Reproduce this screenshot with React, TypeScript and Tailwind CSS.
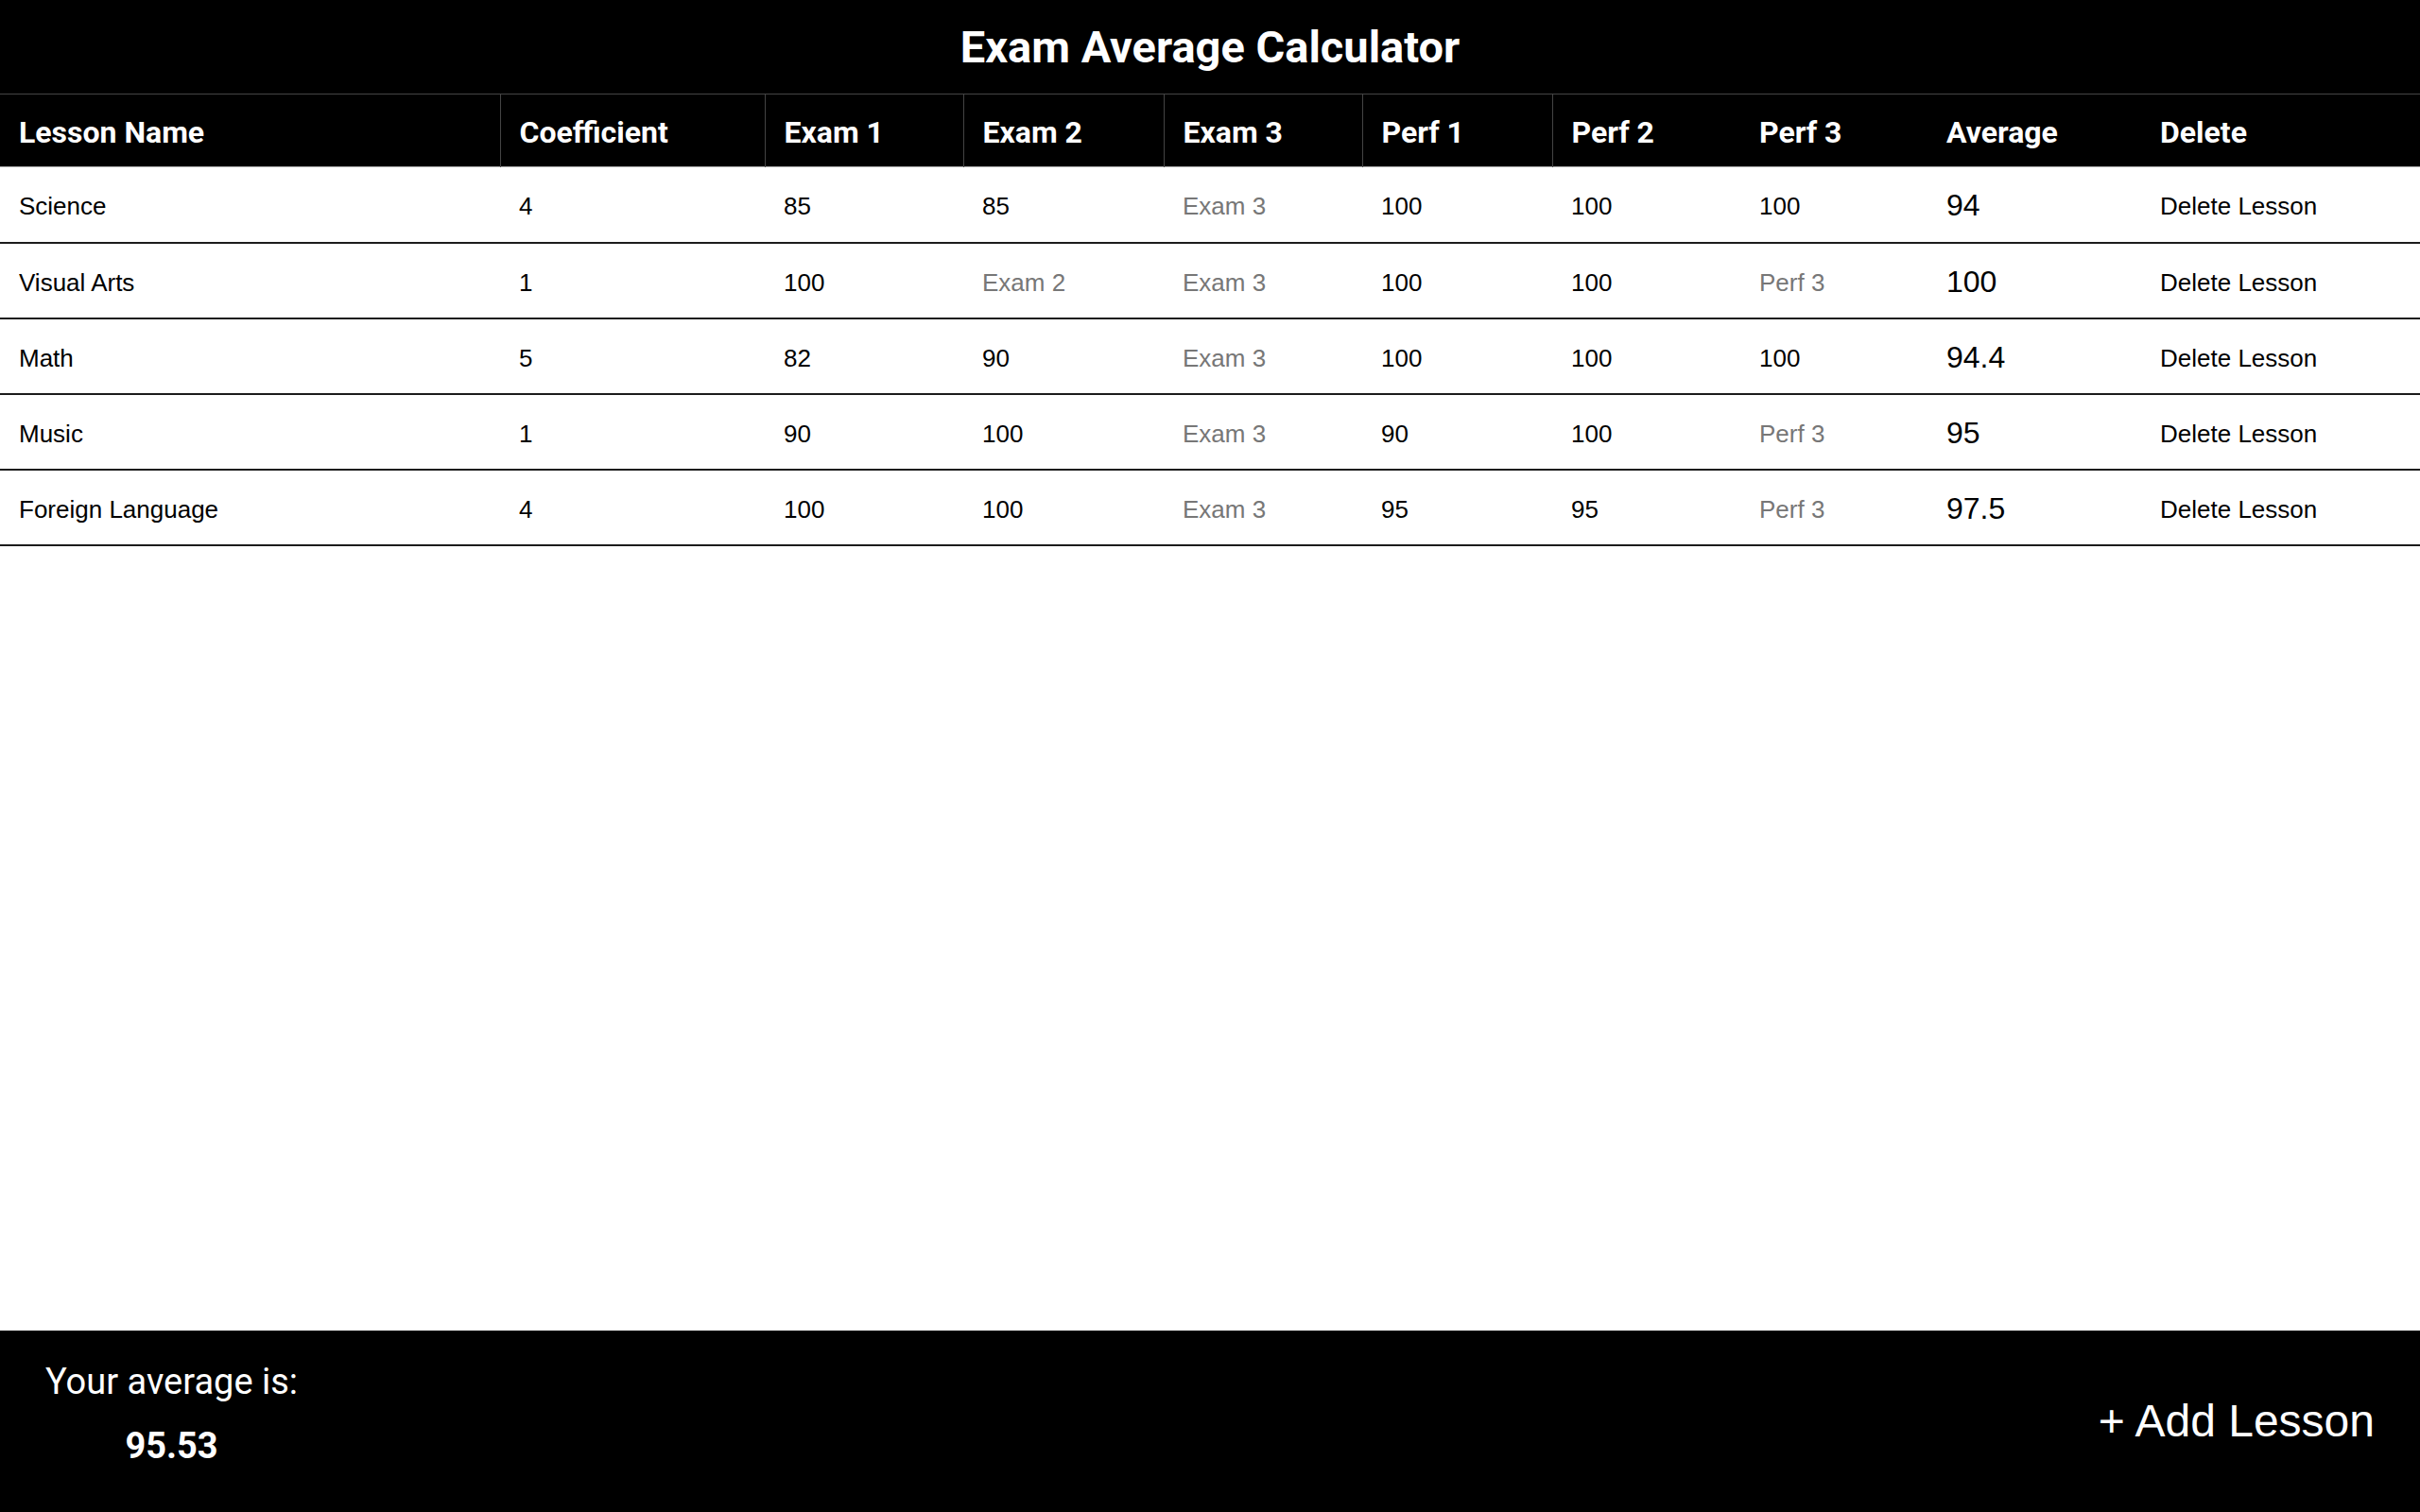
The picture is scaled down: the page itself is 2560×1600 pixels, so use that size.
import React from 'react';

type Lesson = {
  name: string;
  coef: string;
  exams: string[];
  perfs: string[];
  average: string;
};

const lessons: Lesson[] = [
  { name: 'Science', coef: '4', exams: ['85', '85', ''], perfs: ['100', '100', '100'], average: '94' },
  { name: 'Visual Arts', coef: '1', exams: ['100', '', ''], perfs: ['100', '100', ''], average: '100' },
  { name: 'Math', coef: '5', exams: ['82', '90', ''], perfs: ['100', '100', '100'], average: '94.4' },
  { name: 'Music', coef: '1', exams: ['90', '100', ''], perfs: ['90', '100', ''], average: '95' },
  { name: 'Foreign Language', coef: '4', exams: ['100', '100', ''], perfs: ['95', '95', ''], average: '97.5' },
];

const cellInput =
  "w-full bg-transparent outline-none text-[26px] text-black placeholder:text-[#777] font-['Liberation_Sans',Arial,sans-serif]";

function Cell({ value, placeholder }: { value: string; placeholder: string }) {
  return (
    <td className="px-5 pt-[5px] border-b-2 border-[#1c1c1c]">
      <input className={cellInput} defaultValue={value} placeholder={placeholder} />
    </td>
  );
}

export default function App() {
  return (
    <div className="min-h-screen flex flex-col bg-white font-['Roboto',sans-serif]">
      {/* Title */}
      <header className="h-[99px] bg-black flex items-center justify-center">
        <h1 className="text-[47px] font-bold text-white leading-none">Exam Average Calculator</h1>
      </header>

      {/* Lessons table */}
      <table className="w-full table-fixed border-collapse">
        <colgroup>
          <col className="w-[529px]" />
          <col className="w-[280px]" />
          <col className="w-[210px]" />
          <col className="w-[212px]" />
          <col className="w-[210px]" />
          <col className="w-[201px]" />
          <col className="w-[199px]" />
          <col className="w-[198px]" />
          <col className="w-[226px]" />
          <col className="w-[295px]" />
        </colgroup>
        <thead>
          <tr className="h-[77px] bg-black text-white text-left text-[32px] font-bold border-t border-[#444] border-b border-b-[#aaa]">
            <th className="px-5 pt-[3px] border-r border-[#444]">Lesson Name</th>
            <th className="px-5 pt-[3px] border-r border-[#444]">Coefficient</th>
            <th className="px-5 pt-[3px] border-r border-[#444]">Exam 1</th>
            <th className="px-5 pt-[3px] border-r border-[#444]">Exam 2</th>
            <th className="px-5 pt-[3px] border-r border-[#444]">Exam 3</th>
            <th className="px-5 pt-[3px] border-r border-[#444]">Perf 1</th>
            <th className="px-5 pt-[3px]">Perf 2</th>
            <th className="px-5 pt-[3px]">Perf 3</th>
            <th className="px-5 pt-[3px]">Average</th>
            <th className="px-5 pt-[3px]">Delete</th>
          </tr>
        </thead>
        <tbody>
          {lessons.map((l) => (
            <tr key={l.name} className="h-[80px]">
              <Cell value={l.name} placeholder="Lesson Name" />
              <Cell value={l.coef} placeholder="Coefficient" />
              {l.exams.map((v, i) => (
                <Cell key={'e' + i} value={v} placeholder={'Exam ' + (i + 1)} />
              ))}
              {l.perfs.map((v, i) => (
                <Cell key={'p' + i} value={v} placeholder={'Perf ' + (i + 1)} />
              ))}
              <td className="px-5 pt-[2px] border-b-2 border-[#1c1c1c] text-[32px] text-black font-['Liberation_Sans',Arial,sans-serif]">
                {l.average}
              </td>
              <td className="px-5 pt-[5px] border-b-2 border-[#1c1c1c]">
                <button className="text-[26px] text-black font-['Liberation_Sans',Arial,sans-serif]">Delete Lesson</button>
              </td>
            </tr>
          ))}
        </tbody>
      </table>

      {/* Footer */}
      <footer className="mt-auto h-[192px] bg-black text-white flex items-center justify-between pl-12 pr-[48px]">
        <div className="self-start pt-8 inline-flex flex-col items-center gap-6">
          <p className="text-[38px] leading-[1.17]">Your average is:</p>
          <p className="text-[38px] font-bold leading-[1.17]">95.53</p>
        </div>
        <button className="text-[48px] font-['Liberation_Sans',Arial,sans-serif]">+ Add Lesson</button>
      </footer>
    </div>
  );
}
